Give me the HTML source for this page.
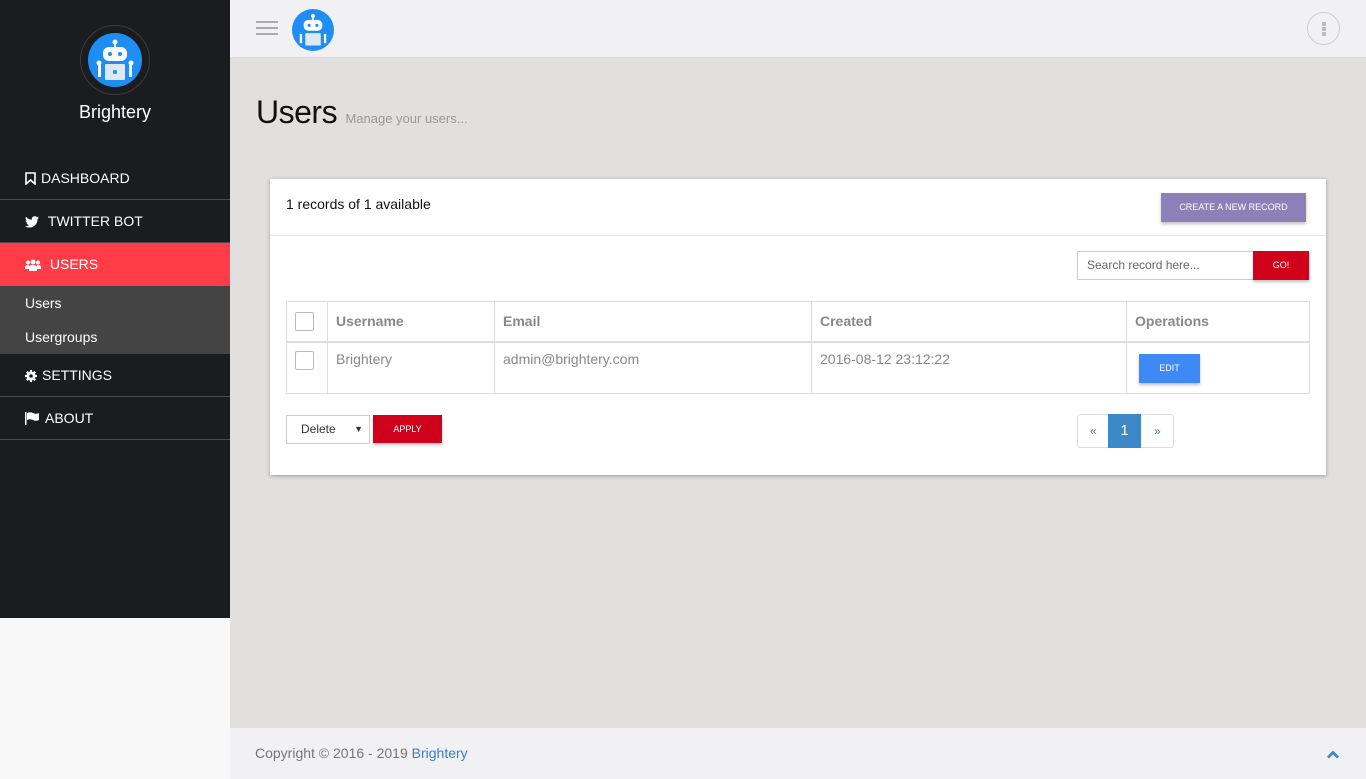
<!DOCTYPE html>
<html><head><meta charset="utf-8"><style>
*{margin:0;padding:0;box-sizing:border-box}
body{width:1366px;height:779px;overflow:hidden;font-family:"Liberation Sans",sans-serif;background:#e1e0df;position:relative}
.side{position:absolute;left:0;top:0;width:230px;height:618px;background:#1b1c1e}
.below{position:absolute;left:0;top:618px;width:230px;height:161px;background:#f8f8f8}
.logo{position:absolute;left:80px;top:25px;width:70px;height:70px;border-radius:50%;border:1px solid #3a3b3e}
.brand{position:absolute;left:0;width:230px;top:102px;text-align:center;color:#fff;font-size:18px}
.nav{position:absolute;left:0;width:230px;color:#fff;font-size:14px;height:43px;line-height:43px;padding-left:25px;border-bottom:1px solid #4a4b4e}
.nav svg{vertical-align:-2px;margin-right:5px}
.sub{position:absolute;left:0;top:286px;width:230px;height:68px;background:#444}
.sub div{color:#fff;font-size:14px;padding-left:25px;height:34px;line-height:34px}
.top{position:absolute;left:230px;top:0;right:0;height:58px;background:#f1f1f3;border-bottom:1px solid #ddd}
.card{position:absolute;left:270px;top:179px;width:1056px;height:296px;background:#fff;box-shadow:0 1px 4px rgba(0,0,0,.3)}
table{position:absolute;left:16px;top:122px;width:1024px;border-collapse:collapse;font-size:14px;color:#888}
td,th{border:1px solid #ddd;text-align:left;padding:0 8px;vertical-align:top}
th{height:39px;line-height:39px;font-weight:bold;border-bottom:2px solid #ddd}
td{height:51px;padding-top:8px}
.cb{width:19px;height:19px;border:1px solid #bbb;border-radius:2px;display:inline-block;margin-top:10px}
.btn{position:absolute;color:#fff;font-size:9px;text-align:center;box-shadow:0 2px 3px rgba(0,0,0,.25)}
</style></head><body>
<div class="side">
<div class="logo"><svg width="54" height="54" viewBox="0 0 54 54" style="position:absolute;left:7px;top:7px"><circle cx="27" cy="27" r="27" fill="#1e8ef5"/><circle cx="27" cy="9" r="2.5" fill="#fff"/><rect x="26" y="10" width="2" height="5" fill="#fff"/><rect x="15" y="14" width="24" height="14" rx="6" fill="#fff"/><circle cx="22" cy="21" r="2" fill="#1e8ef5"/><circle cx="32" cy="21" r="2" fill="#1e8ef5"/><rect x="17" y="31" width="20" height="16" rx="1" fill="#dde9f5"/><circle cx="11" cy="30" r="2.5" fill="#fff"/><circle cx="43" cy="30" r="2.5" fill="#fff"/><rect x="10" y="32" width="3" height="12" fill="#fff"/><rect x="41" y="32" width="3" height="12" fill="#fff"/><circle cx="27" cy="39" r="2" fill="#1e8ef5"/></svg></div>
<div class="brand">Brightery</div>
<div class="nav" style="top:157px"><svg width="11" height="13" viewBox="0 0 11 13"><path d="M1 1h9v11L5.5 8 1 12z" fill="none" stroke="#fff" stroke-width="1.6"/></svg>DASHBOARD</div>
<div class="nav" style="top:200px"><svg width="14" height="12" viewBox="0 0 24 20"><path d="M24 2.4a10 10 0 0 1-2.8.8A5 5 0 0 0 23.3.5a10 10 0 0 1-3.1 1.2A4.9 4.9 0 0 0 11.8 6 14 14 0 0 1 1.7.9a4.9 4.9 0 0 0 1.5 6.6A4.9 4.9 0 0 1 1 6.9a4.9 4.9 0 0 0 3.9 4.8 4.9 4.9 0 0 1-2.2.1 4.9 4.9 0 0 0 4.6 3.4A9.9 9.9 0 0 1 0 17.3 14 14 0 0 0 7.5 19.5c9 0 14-7.5 14-14v-.6A10 10 0 0 0 24 2.4z" fill="#fff"/></svg>&nbsp;TWITTER BOT</div>
<div class="nav" style="top:243px;background:#ff3c48;border:none"><svg width="16" height="12" viewBox="0 0 16 12"><circle cx="8" cy="3" r="2.5" fill="#fff"/><circle cx="3" cy="3.5" r="2" fill="#fff"/><circle cx="13" cy="3.5" r="2" fill="#fff"/><path d="M4 12V8q0-2 4-2t4 2v4zM0 10V8q0-2 3-2h1v4zM16 10V8q0-2-3-2h-1v4z" fill="#fff"/></svg>&nbsp;USERS</div>
<div class="sub"><div>Users</div><div>Usergroups</div></div>
<div class="nav" style="top:354px"><svg width="12" height="12" viewBox="0 0 12 12"><circle cx="6" cy="6" r="4.5" fill="#fff"/><path d="M6 0v12M0 6h12M1.8 1.8l8.4 8.4M10.2 1.8l-8.4 8.4" stroke="#fff" stroke-width="2.2"/><circle cx="6" cy="6" r="1.8" fill="#1b1c1e"/></svg>SETTINGS</div>
<div class="nav" style="top:397px"><svg width="15" height="13" viewBox="0 0 15 13"><rect x="0" y="0" width="1.5" height="13" fill="#fff"/><path d="M2 1q3-1.5 6 0t6 0v7q-3 1.5-6 0t-6 0z" fill="#fff"/></svg>ABOUT</div>
</div>
<div class="below"></div>
<div class="top">
<div style="position:absolute;left:26px;top:21px;width:22px;height:2px;background:#aaa;box-shadow:0 6px 0 #aaa,0 12px 0 #aaa"></div>
<svg width="42" height="42" viewBox="0 0 54 54" style="position:absolute;left:62px;top:9px"><circle cx="27" cy="27" r="27" fill="#1e8ef5"/><circle cx="27" cy="9" r="2.5" fill="#fff"/><rect x="26" y="10" width="2" height="5" fill="#fff"/><rect x="15" y="14" width="24" height="14" rx="6" fill="#fff"/><circle cx="22" cy="21" r="2" fill="#1e8ef5"/><circle cx="32" cy="21" r="2" fill="#1e8ef5"/><rect x="17" y="31" width="20" height="16" rx="1" fill="#dde9f5"/><rect x="10" y="32" width="3" height="12" fill="#fff"/><rect x="41" y="32" width="3" height="12" fill="#fff"/></svg>
<div style="position:absolute;left:1077px;top:12px;width:33px;height:33px;border:1px solid #ccc;border-radius:50%"><div style="position:absolute;left:14px;top:9px;width:4px;height:4px;background:#bbb;box-shadow:0 5px 0 #bbb,0 10px 0 #bbb"></div></div>
</div>
<div style="position:absolute;left:256px;top:94px;font-size:32px;color:#111;letter-spacing:-0.5px">Users <span style="font-size:13px;color:#999;letter-spacing:0">Manage your users...</span></div>
<div class="card">
<div style="position:absolute;left:16px;top:17px;font-size:14px;color:#111">1 records of 1 available</div>
<div class="btn" style="left:891px;top:14px;width:145px;height:29px;line-height:29px;background:#8b80b8">CREATE A NEW RECORD</div>
<div style="position:absolute;left:0;top:56px;width:100%;border-top:1px solid #e5e5e5"></div>
<div style="position:absolute;left:807px;top:72px;width:177px;height:29px;border:1px solid #ccc;font-size:12px;color:#666;line-height:27px;padding-left:9px">Search record here...</div>
<div class="btn" style="left:983px;top:72px;width:56px;height:29px;line-height:29px;background:#d0021b">GO!</div>
<table><tr><th style="width:41px"><span class="cb" style="margin-top:10px;vertical-align:top"></span></th><th style="width:167px">Username</th><th style="width:317px">Email</th><th style="width:315px">Created</th><th>Operations</th></tr>
<tr><td><span class="cb" style="margin-top:0"></span></td><td>Brightery</td><td>admin@brightery.com</td><td>2016-08-12 23:12:22</td><td><span style="display:inline-block;margin:3px 0 0 4px;width:61px;height:29px;line-height:29px;background:#3d89f5;color:#fff;font-size:9px;text-align:center;box-shadow:0 2px 3px rgba(0,0,0,.25)">EDIT</span></td></tr></table>
<div style="position:absolute;left:16px;top:236px;width:84px;height:29px;border:1px solid #ccc;font-size:12px;color:#333;line-height:27px;padding-left:14px">Delete <span style="position:absolute;right:6px;font-size:9px">▼</span></div>
<div class="btn" style="left:103px;top:236px;width:69px;height:28px;line-height:28px;background:#d0021b">APPLY</div>
<div style="position:absolute;left:807px;top:235px;width:97px;height:34px;border:1px solid #ddd;border-radius:3px;font-size:12px;color:#3d89c8;line-height:32px">
<span style="position:absolute;left:12px">«</span><span style="position:absolute;left:30px;top:-1px;width:33px;height:34px;background:#3d89c8;color:#fff;text-align:center;font-size:15px;line-height:34px">1</span><span style="position:absolute;left:76px">»</span></div>
</div>
<div style="position:absolute;left:230px;top:728px;right:0;height:51px;background:#f1f1f3;font-size:14px;color:#777;line-height:51px;padding-left:25px">Copyright © 2016 - 2019 <span style="color:#3d7cc9">Brightery</span><svg width="14" height="9" viewBox="0 0 14 9" style="position:absolute;right:26px;top:22px"><path d="M2 7.5l5-5 5 5" fill="none" stroke="#3d89c8" stroke-width="2.8"/></svg></div>
</body></html>
